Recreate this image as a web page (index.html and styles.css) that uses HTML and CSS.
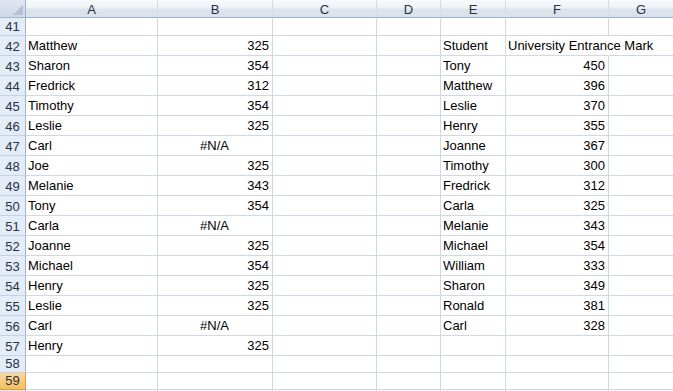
FILE: index.html
```
<!DOCTYPE html>
<html>
<head>
<meta charset="utf-8">
<link rel="stylesheet" href="styles.css">
</head>
<body>
<div class="sheet">
  <div class="corner"><svg width="10" height="10" viewBox="0 0 10 10"><polygon points="10,0 10,10 0,10" fill="#b4bfcf"/></svg></div>
  <div class="ch">A</div><div class="ch">B</div><div class="ch">C</div><div class="ch">D</div><div class="ch">E</div><div class="ch">F</div><div class="ch">G</div>

  <div class="rh">41</div><div class="c"></div><div class="c"></div><div class="c"></div><div class="c"></div><div class="c"></div><div class="c"></div><div class="c"></div>

  <div class="rh">42</div><div class="c">Matthew</div><div class="c n">325</div><div class="c"></div><div class="c"></div><div class="c">Student</div><div class="c spill">University Entrance Mark</div><div class="c"></div>
  <div class="rh">43</div><div class="c">Sharon</div><div class="c n">354</div><div class="c"></div><div class="c"></div><div class="c">Tony</div><div class="c n">450</div><div class="c"></div>
  <div class="rh">44</div><div class="c">Fredrick</div><div class="c n">312</div><div class="c"></div><div class="c"></div><div class="c">Matthew</div><div class="c n">396</div><div class="c"></div>
  <div class="rh">45</div><div class="c">Timothy</div><div class="c n">354</div><div class="c"></div><div class="c"></div><div class="c">Leslie</div><div class="c n">370</div><div class="c"></div>
  <div class="rh">46</div><div class="c">Leslie</div><div class="c n">325</div><div class="c"></div><div class="c"></div><div class="c">Henry</div><div class="c n">355</div><div class="c"></div>
  <div class="rh">47</div><div class="c">Carl</div><div class="c na">#N/A</div><div class="c"></div><div class="c"></div><div class="c">Joanne</div><div class="c n">367</div><div class="c"></div>
  <div class="rh">48</div><div class="c">Joe</div><div class="c n">325</div><div class="c"></div><div class="c"></div><div class="c">Timothy</div><div class="c n">300</div><div class="c"></div>
  <div class="rh">49</div><div class="c">Melanie</div><div class="c n">343</div><div class="c"></div><div class="c"></div><div class="c">Fredrick</div><div class="c n">312</div><div class="c"></div>
  <div class="rh">50</div><div class="c">Tony</div><div class="c n">354</div><div class="c"></div><div class="c"></div><div class="c">Carla</div><div class="c n">325</div><div class="c"></div>
  <div class="rh">51</div><div class="c">Carla</div><div class="c na">#N/A</div><div class="c"></div><div class="c"></div><div class="c">Melanie</div><div class="c n">343</div><div class="c"></div>
  <div class="rh">52</div><div class="c">Joanne</div><div class="c n">325</div><div class="c"></div><div class="c"></div><div class="c">Michael</div><div class="c n">354</div><div class="c"></div>
  <div class="rh">53</div><div class="c">Michael</div><div class="c n">354</div><div class="c"></div><div class="c"></div><div class="c">William</div><div class="c n">333</div><div class="c"></div>
  <div class="rh">54</div><div class="c">Henry</div><div class="c n">325</div><div class="c"></div><div class="c"></div><div class="c">Sharon</div><div class="c n">349</div><div class="c"></div>
  <div class="rh">55</div><div class="c">Leslie</div><div class="c n">325</div><div class="c"></div><div class="c"></div><div class="c">Ronald</div><div class="c n">381</div><div class="c"></div>
  <div class="rh">56</div><div class="c">Carl</div><div class="c na">#N/A</div><div class="c"></div><div class="c"></div><div class="c">Carl</div><div class="c n">328</div><div class="c"></div>
  <div class="rh">57</div><div class="c">Henry</div><div class="c n">325</div><div class="c"></div><div class="c"></div><div class="c"></div><div class="c"></div><div class="c"></div>

  <div class="rh">58</div><div class="c"></div><div class="c"></div><div class="c"></div><div class="c"></div><div class="c"></div><div class="c"></div><div class="c"></div>
  <div class="rh sel">59</div><div class="c"></div><div class="c"></div><div class="c"></div><div class="c"></div><div class="c"></div><div class="c"></div><div class="c"></div>
  <div class="rh"></div><div class="c"></div><div class="c"></div><div class="c"></div><div class="c"></div><div class="c"></div><div class="c"></div><div class="c"></div>
</div>
</body>
</html>
```

FILE: styles.css
```
html, body {
  margin: 0;
  padding: 0;
  background: #ffffff;
  overflow: hidden;
  width: 673px;
  height: 391px;
}

.sheet {
  display: grid;
  grid-template-columns: 26px 132px 115px 104px 64px 65px 103px 65px;
  grid-template-rows: 18px 18px repeat(16, 20px) 17px 17px 17px;
  font-family: "Liberation Sans", Arial, sans-serif;
  font-size: 13px;
  color: #000;
  background: #fff;
}

.corner {
  box-sizing: border-box;
  border-right: 1px solid #9eb6ce;
  border-bottom: 1px solid #9eb6ce;
  background: linear-gradient(#dfe6f0, #cfd9e7);
  display: flex;
  align-items: flex-end;
  justify-content: flex-end;
  padding: 0 2px 2px 0;
}
.corner svg { display: block; }

.ch {
  box-sizing: border-box;
  border-right: 1px solid #d5dde8;
  border-bottom: 1px solid #9eb6ce;
  background: linear-gradient(#f8fafc 0%, #eef2f7 45%, #dde4ee 55%, #d9e1ec 100%);
  color: #27313f;
  display: flex;
  align-items: center;
  justify-content: center;
  line-height: 15px;
  padding-top: 1px;
}

.rh {
  box-sizing: border-box;
  border-right: 1px solid #9eb6ce;
  border-bottom: 1px solid #c5d2e3;
  background: #e4ecf7;
  color: #27313f;
  display: flex;
  align-items: flex-end;
  justify-content: center;
  line-height: 15px;
  padding-bottom: 1px;
}

.rh.sel {
  background: linear-gradient(#f9d99f, #f1c15f);
  border-right-color: #f29536;
  border-bottom-color: #f29536;
}

.c {
  box-sizing: border-box;
  border-right: 1px solid #d0d7e5;
  border-bottom: 1px solid #d0d7e5;
  display: flex;
  align-items: flex-end;
  padding: 0 3px 2px 2px;
  line-height: 15px;
  white-space: nowrap;
  min-width: 0;
}

.n { justify-content: flex-end; }
.na { justify-content: center; }

.spill {
  overflow: visible;
  border-right-color: #ffffff;
  position: relative;
  z-index: 1;
}
```
